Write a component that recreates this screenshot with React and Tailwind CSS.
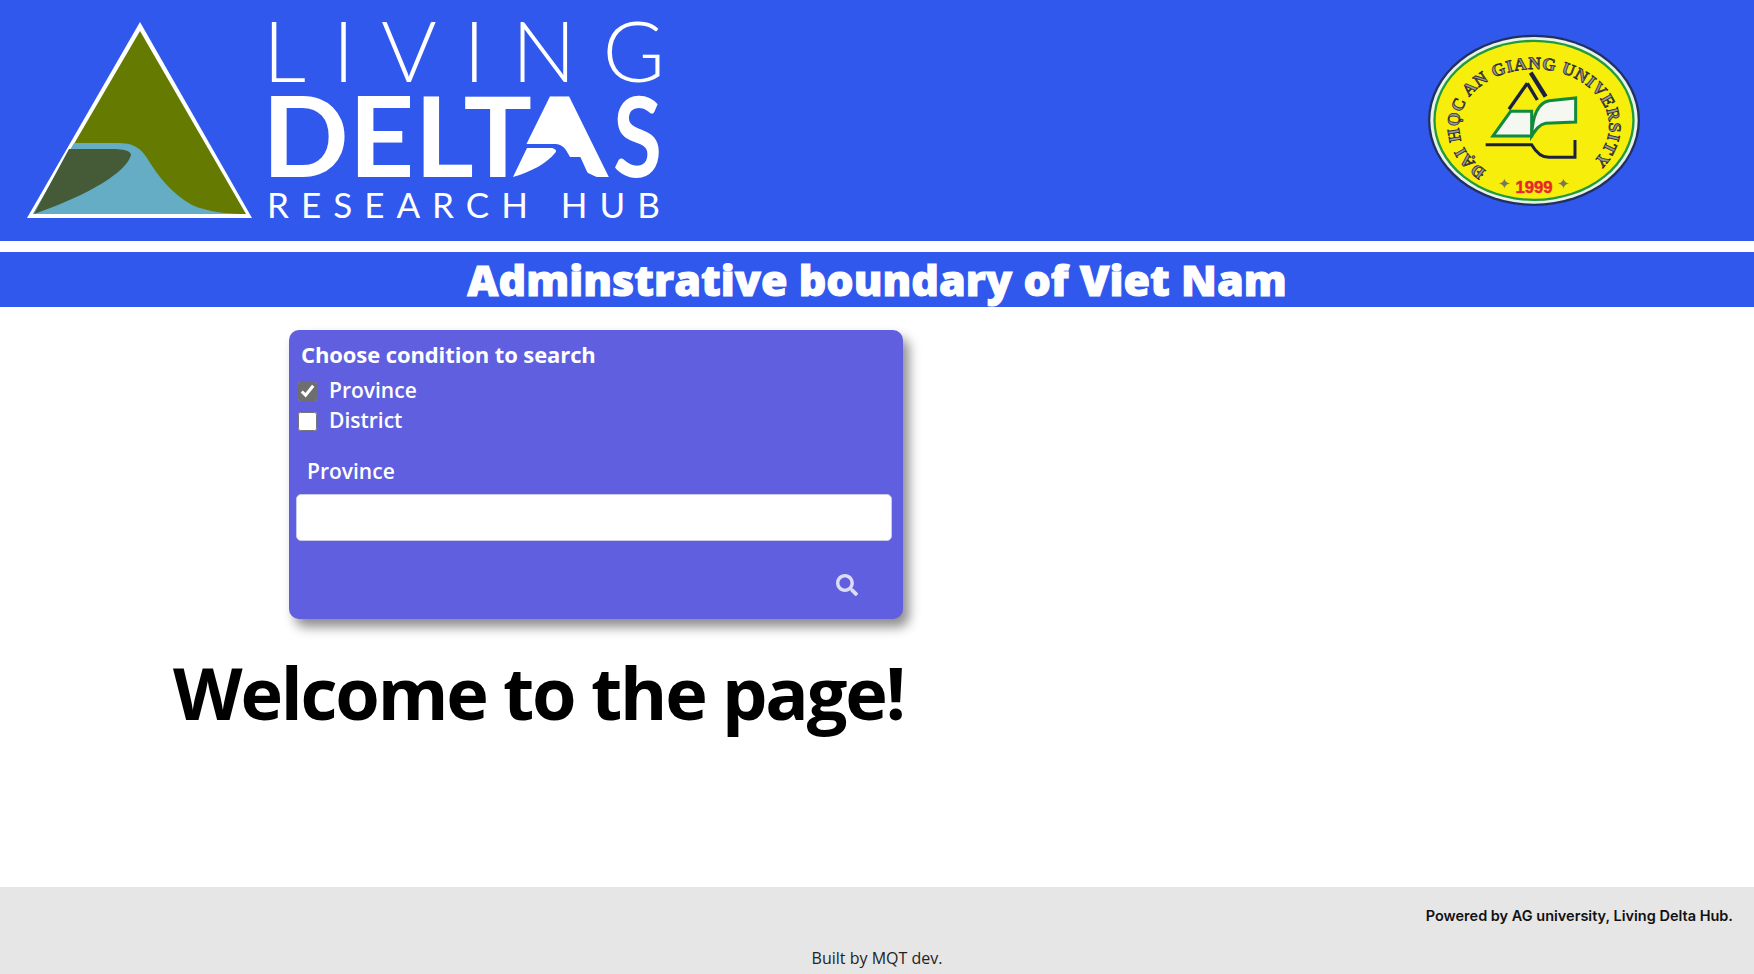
import React from "react";
import { FaSearch } from "react-icons/fa";

function DeltasLogo() {
  return (
    <svg className="shrink-0" width="680" height="241" viewBox="0 0 680 241">
      {/* triangle mark */}
      <polygon points="140,22 252,218 27,218" fill="white" />
      <polygon points="140,31 246,214 33,214" fill="#647a00" />
      <path d="M74 143 L118 143 C132 143 140 147 147 158 C158 176 172 194 192 205 C208 212 228 214 246 214 L33 214 Z" fill="#64adc4" />
      <path d="M69 149 L112 149 C124 149 131 151 131 155 C128 166 112 178 94 188 C76 198 56 206 34 214 Z" fill="#455a36" />

      {/* wordmark */}
      <text x="263" y="82" textLength="402" lengthAdjust="spacing" fill="white" fontSize="85" className="font-['Lato',sans-serif] font-light">
        LIVING
      </text>
      <text x="262" y="177" textLength="270" lengthAdjust="spacingAndGlyphs" fill="white" fontSize="111" className="font-['Lato',sans-serif] font-bold">
        DELT
      </text>
      <text x="511" y="177" textLength="97" lengthAdjust="spacingAndGlyphs" fill="white" fontSize="111" className="font-['Lato',sans-serif] font-bold">
        A
      </text>
      <text x="613" y="177" textLength="49" lengthAdjust="spacingAndGlyphs" fill="white" fontSize="111" className="font-['Lato',sans-serif] font-bold">
        S
      </text>
      {/* fills the counter of the A, then the cut and swoosh from the mark */}
      <polygon points="558,105 527,148 582,152" fill="white" />
      <path d="M524 144 L556 144 C564 145 566 150 570 157 C577 168 588 174 600 178 L505 178 Z" fill="#3158ec" />
      <path d="M527 148 L552 148 C556 149 557 151 555 153 C547 163 531 172 513 177 Z" fill="white" />
      <text x="267" y="218" textLength="393" lengthAdjust="spacing" fill="white" fontSize="35" className="font-['Lato',sans-serif] font-normal">
        RESEARCH HUB
      </text>
    </svg>
  );
}

function UniversityLogo() {
  return (
    <svg className="shrink-0" width="214" height="173" viewBox="0 0 214 173">
      <g transform="translate(-28 -14) scale(0.3333)">
        <ellipse cx="405" cy="301" rx="318" ry="257" fill="#20305f" />
        <ellipse cx="405" cy="301" rx="311" ry="250" fill="#e8f2e8" />
        <ellipse cx="405" cy="301" rx="302" ry="242" fill="#1f9a3c" />
        <ellipse cx="405" cy="301" rx="295" ry="235" fill="#f7ee0c" />

        <path id="uni-arc" d="M262 452 A225 172 0 1 1 548 452" fill="none" />
        <text fontSize="52" fontWeight="700" letterSpacing="2.5" fill="#9a9a9a" stroke="#2e2e2e" strokeWidth="2.5" className="font-['Liberation_Serif',serif]">
          <textPath href="#uni-arc">ĐẠI HỌC AN GIANG UNIVERSITY</textPath>
        </text>

        {/* book and peak */}
        <path d="M395 158 L440 230" stroke="#1b2140" strokeWidth="13" fill="none" />
        <path d="M385 190 L330 268" stroke="#1b2140" strokeWidth="10" fill="none" />
        <path d="M385 190 L415 240" stroke="#1b2140" strokeWidth="10" fill="none" />
        <path d="M282 348 L335 274 L398 274 L398 348 Z" fill="#f4f8f0" stroke="#118a3c" strokeWidth="9" />
        <path d="M398 348 C400 300 410 250 450 242 L530 234 L530 306 L440 310 C420 314 410 330 398 348 Z" fill="#f4f8f0" stroke="#118a3c" strokeWidth="9" />
        <path d="M260 374 L398 374 C410 395 425 412 450 412 L528 412 L528 360" stroke="#1b2140" strokeWidth="9" fill="none" />

        <text x="318" y="508" fontSize="46" fill="#77775a" textAnchor="middle">✦</text>
        <text x="494" y="508" fontSize="46" fill="#77775a" textAnchor="middle">✦</text>
        <text x="405" y="518" fontSize="50" fontWeight="700" fill="#e8262c" stroke="#e8262c" strokeWidth="1.5" textAnchor="middle" className="font-['Liberation_Sans',sans-serif]">
          1999
        </text>
      </g>
    </svg>
  );
}

export default function App() {
  return (
    <div className="min-h-screen flex flex-col bg-white font-['Open_Sans',sans-serif]">
      <header className="h-[241px] bg-[#3158ec] flex items-center justify-between pr-[113px]">
        <DeltasLogo />
        <UniversityLogo />
      </header>

      <div className="mt-[11px] h-[55px] bg-[#3158ec] flex items-center justify-center">
        <h2 className="text-white text-[43px] leading-none font-extrabold font-['Open_Sans',sans-serif] [-webkit-text-stroke:1px_white]">
          Adminstrative boundary of Viet Nam
        </h2>
      </div>

      <main className="flex-1 pt-[23px]">
        <div className="ml-[289px] w-[614px] h-[289px] rounded-[10px] bg-[#5f5fdf] shadow-[6px_8px_12px_rgba(0,0,0,0.45)] text-white flex flex-col pl-[7px] pr-[11px]">
          <p className="mt-[9px] ml-[5px] text-[22px] leading-[30px] font-bold tracking-[-0.1px]">
            Choose condition to search
          </p>
          <label className="mt-[7px] flex items-center h-[30px] text-[21px] font-semibold">
            <input type="checkbox" defaultChecked className="w-[19px] h-[19px] ml-[2px] accent-[#6e6e6e]" />
            <span className="ml-[12px]">Province</span>
          </label>
          <label className="flex items-center h-[30px] text-[21px] font-semibold">
            <input type="checkbox" className="w-[19px] h-[19px] ml-[2px]" />
            <span className="ml-[12px]">District</span>
          </label>
          <p className="mt-[20px] ml-[11px] text-[21px] leading-[30px] font-semibold">Province</p>
          <input type="text" className="mt-[8px] h-[47px] w-full rounded-[5px] bg-white border border-[#c9c9e8] outline-none" />
          <div className="mt-[33px] flex justify-end pr-[34px]">
            <FaSearch className="text-[22px] text-[#dcdcf8]" />
          </div>
        </div>

        <h1 className="ml-[173px] mt-[31px] text-[72px] leading-[84px] font-bold text-black tracking-[-2.2px]">
          Welcome to the page!
        </h1>
      </main>

      <footer className="h-[87px] bg-[#e6e6e6] flex flex-col">
        <p className="mt-[19px] pr-[21px] text-right text-[14.5px] leading-[20px] font-semibold text-[#111] font-['Inter',sans-serif]">
          Powered by AG university, Living Delta Hub.
        </p>
        <p className="mt-[20px] text-center text-[16px] leading-[24px] text-[#222]">Built by MQT dev.</p>
      </footer>
    </div>
  );
}
